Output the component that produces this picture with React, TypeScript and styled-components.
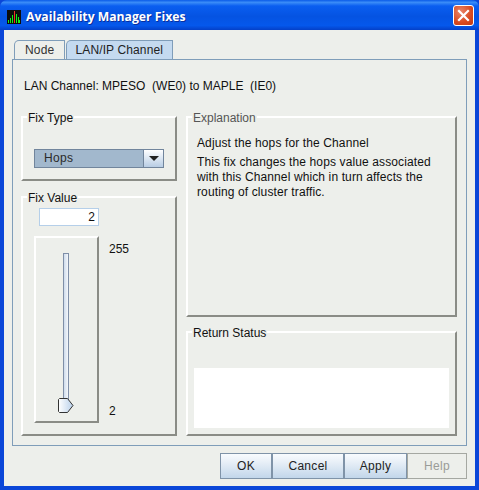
import React from 'react';
import styled, {createGlobalStyle} from "styled-components";

const GlobalStyle = createGlobalStyle`
  html, body {
    margin: 0;
    padding: 0;
    background: #0a46d8;
  }
  * {
    box-sizing: border-box;
  }
`

const App = () => {
    return (
        <Window>
            <GlobalStyle/>
            <TitleBar>
                <AppIcon viewBox="0 0 14 14">
                    <rect width="14" height="14" fill="#0c0c0c"/>
                    <path d="M1.5 13V10M3.5 13V8M5.5 13V5M9.5 13V4M11.5 13V7M12.5 13V10" stroke="#14f014" strokeWidth="1"/>
                    <path d="M7.5 13V1" stroke="#f03020" strokeWidth="1"/>
                </AppIcon>
                <TitleText>Availability Manager Fixes</TitleText>
                <CloseButton>
                    <svg width="13" height="13" viewBox="0 0 13 13">
                        <path d="M2 2L11 11M11 2L2 11" stroke="#fff" strokeWidth="2.2" strokeLinecap="square"/>
                    </svg>
                </CloseButton>
            </TitleBar>
            <Body>
                <Tabs>
                    <Tab>Node</Tab>
                    <Tab $active>LAN/IP Channel</Tab>
                </Tabs>
                <TabPanel>
                    <ChannelLine>LAN Channel: MPESO&nbsp; (WE0) to MAPLE&nbsp; (IE0)</ChannelLine>
                    <Columns>
                        <LeftColumn>
                            <FixTypeGroup>
                                <GroupTitle>Fix Type</GroupTitle>
                                <Combo>
                                    <ComboValue>Hops</ComboValue>
                                    <ComboArrow>
                                        <svg width="10" height="5" viewBox="0 0 10 5">
                                            <path d="M0 0H10L5 5Z" fill="#222"/>
                                        </svg>
                                    </ComboArrow>
                                </Combo>
                            </FixTypeGroup>
                            <FixValueGroup>
                                <GroupTitle>Fix Value</GroupTitle>
                                <ValueInput>2</ValueInput>
                                <SliderRow>
                                    <SliderBox>
                                        <SliderTrack/>
                                        <SliderThumb viewBox="0 0 16 15">
                                            <defs>
                                                <linearGradient id="thumbFill" x1="0" x2="1" y1="0" y2="0">
                                                    <stop offset="0" stopColor="#ffffff"/>
                                                    <stop offset="1" stopColor="#b9d0ea"/>
                                                </linearGradient>
                                            </defs>
                                            <path d="M1.5 .5H9.5L15 7.5L9.5 14.5H1.5L.5 13.5V1.5Z" fill="url(#thumbFill)" stroke="#333"/>
                                        </SliderThumb>
                                    </SliderBox>
                                    <SliderLabels>
                                        <span>255</span>
                                        <span>2</span>
                                    </SliderLabels>
                                </SliderRow>
                            </FixValueGroup>
                        </LeftColumn>
                        <RightColumn>
                            <ExplanationGroup>
                                <GroupTitle $muted>Explanation</GroupTitle>
                                <ExplainText>Adjust the hops for the Channel</ExplainText>
                                <ExplainText>
                                    This fix changes the hops value associated<br/>
                                    with this Channel which in turn affects the<br/>
                                    routing of cluster traffic.
                                </ExplainText>
                            </ExplanationGroup>
                            <StatusGroup>
                                <GroupTitle>Return Status</GroupTitle>
                                <StatusBox/>
                            </StatusGroup>
                        </RightColumn>
                    </Columns>
                </TabPanel>
                <ButtonRow>
                    <ActionButton $width={52}>OK</ActionButton>
                    <ActionButton $width={72}>Cancel</ActionButton>
                    <ActionButton $width={63}>Apply</ActionButton>
                    <ActionButton $width={60} $disabled>Help</ActionButton>
                </ButtonRow>
            </Body>
        </Window>
    );
};

export default App;


const Window = styled.div`
  width: 479px;
  height: 490px;
  display: flex;
  flex-direction: column;
  overflow: hidden;
  background: #0a46d8;
  border-radius: 7px 7px 0 0;
  font-family: "Liberation Sans", Arial, sans-serif;
  font-size: 12px;
  color: #111;
`

const TitleBar = styled.div`
  height: 30px;
  flex: none;
  display: flex;
  align-items: center;
  padding: 3px 5px 0 7px;
  background: linear-gradient(180deg, #0a5be8 0%, #3a8cf8 8%, #0a5ef0 20%, #0553e2 55%, #0558ec 85%, #0440c8 100%);
`

const AppIcon = styled.svg`
  width: 14px;
  height: 14px;
  margin-right: 5px;
`

const TitleText = styled.div`
  flex: 1;
  color: #fff;
  font-family: "Open Sans", sans-serif;
  font-weight: 700;
  font-size: 12.2px;
  text-shadow: 1px 1px 0 #0a2f9c;
`

const CloseButton = styled.div`
  width: 21px;
  height: 21px;
  margin-top: -3px;
  display: flex;
  align-items: center;
  justify-content: center;
  border: 1px solid #fff;
  border-radius: 3px;
  background: radial-gradient(circle at 35% 30%, #e9856a, #d8491f 60%, #c23a14);
`

const Body = styled.div`
  flex: 1;
  margin: 0 4px 4px;
  background: #edefeb;
  padding: 10px 8px 0;
  display: flex;
  flex-direction: column;
`

const Tabs = styled.div`
  display: flex;
  height: 19px;
  padding-left: 2px;
  gap: 1px;
`

const Tab = styled.div<{ $active?: boolean }>`
  height: 19px;
  padding: 2px 9px 0 ${props => props.$active ? 9 : 10}px;
  border: 1px solid #7f9db9;
  border-bottom: 0;
  border-radius: 5px 0 0 0;
  color: ${props => props.$active ? '#222' : '#333'};
  background: ${props => props.$active ? '#c4daf0' : 'transparent'};
  letter-spacing: ${props => props.$active ? '.12px' : '.2px'};
`

const TabPanel = styled.div`
  height: 387px;
  flex: none;
  width: 455px;
  border: 1px solid #7f9db9;
  padding: 19px 8px 0;
`

const ChannelLine = styled.div`
  height: 37px;
  padding-left: 3px;
  line-height: 14px;
`

const Columns = styled.div`
  display: flex;
  gap: 9px;
`

const LeftColumn = styled.div`
  width: 156px;
  display: flex;
  flex-direction: column;
  gap: 15px;
`

const RightColumn = styled.div`
  width: 271px;
  display: flex;
  flex-direction: column;
  gap: 14px;
`

const Group = styled.div`
  position: relative;
  border-top: 2px solid #fff;
  border-left: 2px solid #fff;
  border-right: 2px solid #8a8c86;
  border-bottom: 2px solid #8a8c86;
`

const GroupTitle = styled.div<{ $muted?: boolean }>`
  position: absolute;
  top: -7px;
  left: 4px;
  padding: 0 1px;
  line-height: 14px;
  background: #edefeb;
  color: ${props => props.$muted ? '#555' : '#111'};
`

const FixTypeGroup = styled(Group)`
  height: 65px;
  padding: 31px 11px 0;
`

const Combo = styled.div`
  width: 130px;
  height: 19px;
  display: flex;
  border: 1px solid #71859c;
  background: #a2b8cd;
`

const ComboValue = styled.div`
  flex: 1;
  padding-left: 9px;
  line-height: 17px;
  color: #2a2a2a;
  border-right: 1px solid #71859c;
  letter-spacing: .3px;
`

const ComboArrow = styled.div`
  width: 19px;
  display: flex;
  align-items: center;
  justify-content: center;
  background: linear-gradient(180deg, #ffffff 0%, #dbe6f2 50%, #b8cde4 100%);
`

const FixValueGroup = styled(Group)`
  height: 240px;
  padding: 10px 11px 0;
`

const ValueInput = styled.div`
  width: 60px;
  height: 18px;
  margin-left: 5px;
  padding-right: 3px;
  text-align: right;
  line-height: 16px;
  background: #fff;
  border: 1px solid #b5cfe9;
`

const SliderRow = styled.div`
  display: flex;
  margin-top: 10px;
`

const SliderBox = styled.div`
  position: relative;
  width: 65px;
  height: 187px;
  border-top: 2px solid #fff;
  border-left: 2px solid #fff;
  border-right: 2px solid #8a8c86;
  border-bottom: 2px solid #8a8c86;
  display: flex;
  justify-content: center;
  padding-top: 15px;
`

const SliderTrack = styled.div`
  width: 6px;
  height: 150px;
  margin-right: 1px;
  border: 1px solid #7f8fa8;
  border-bottom: 0;
  background: linear-gradient(90deg, #cfdcec, #f4f7fb);
`

const SliderThumb = styled.svg`
  position: absolute;
  left: 22px;
  top: 160px;
  width: 16px;
  height: 15px;
`

const SliderLabels = styled.div`
  height: 186px;
  margin-left: 10px;
  padding: 6px 0 4px;
  display: flex;
  flex-direction: column;
  justify-content: space-between;
  align-items: flex-start;
  line-height: 14px;
`

const ExplanationGroup = styled(Group)`
  height: 201px;
  padding: 18px 9px 0;
`

const ExplainText = styled.div`
  line-height: 15px;
  margin-bottom: 4px;
  letter-spacing: .12px;
`

const StatusGroup = styled(Group)`
  height: 105px;
  padding: 35px 6px 0;
`

const StatusBox = styled.div`
  height: 60px;
  background: #fff;
`

const ButtonRow = styled.div`
  display: flex;
  justify-content: flex-end;
  height: 26px;
  margin-top: 7px;
  width: 455px;
`

const ActionButton = styled.div<{ $width: number; $disabled?: boolean }>`
  width: ${props => props.$width}px;
  height: 26px;
  display: flex;
  align-items: center;
  justify-content: center;
  letter-spacing: .3px;
  border: 1px solid ${props => props.$disabled ? '#a5a8a2' : '#7f93a8'};
  color: ${props => props.$disabled ? '#9a9c98' : '#222'};
  background: ${props => props.$disabled ? 'transparent' : 'linear-gradient(180deg, #f8fbfe 0%, #eaf1f8 30%, #c2d6ea 100%)'};
`
